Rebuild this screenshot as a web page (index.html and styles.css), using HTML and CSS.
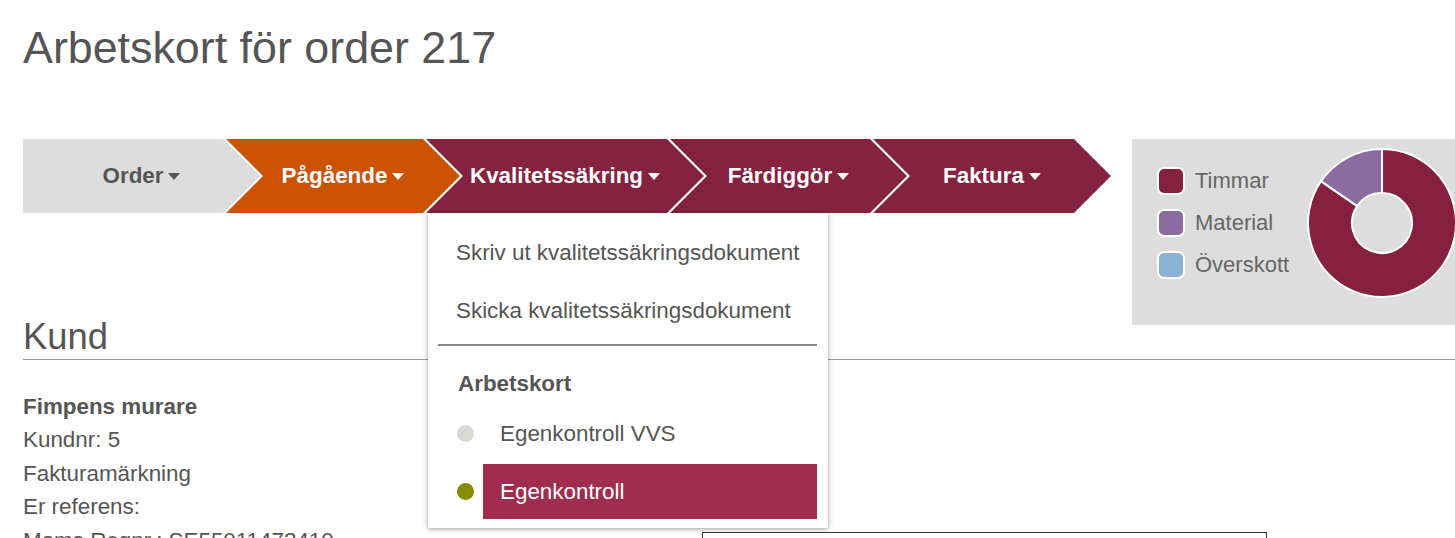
FILE: index.html
```html
<!DOCTYPE html>
<html lang="sv">
<head>
    <meta charset="UTF-8">
    <meta name="viewport" content="width=device-width, initial-scale=1.0">
    <title>Arbetskort för order 217</title>
    <link rel="stylesheet" href="styles.css">
</head>
<body>
    <div class="page">
        <h1 class="page-title">Arbetskort för order 217</h1>

        <!-- Order steps + cost chart -->
        <div class="top-row">
            <ul class="steps">
                <li class="step step-first step-done">
                    <span class="step-shape">Order<i class="caret"></i></span>
                </li>
                <li class="step step-active step-narrow">
                    <span class="step-shape">Pågående<i class="caret"></i></span>
                </li>
                <li class="step step-todo">
                    <span class="step-shape">Kvalitetssäkring<i class="caret"></i></span>

                    <!-- Open dropdown -->
                    <div class="dropdown">
                        <a class="dropdown-link" href="#">Skriv ut kvalitetssäkringsdokument</a>
                        <a class="dropdown-link" href="#">Skicka kvalitetssäkringsdokument</a>
                        <div class="dropdown-divider"></div>
                        <div class="dropdown-header">Arbetskort</div>
                        <div class="card-row">
                            <span class="status-dot dot-empty"></span>
                            <a class="card-link" href="#">Egenkontroll VVS</a>
                        </div>
                        <div class="card-row">
                            <span class="status-dot dot-done"></span>
                            <a class="card-link card-link-selected" href="#">Egenkontroll</a>
                        </div>
                    </div>
                </li>
                <li class="step step-todo">
                    <span class="step-shape">Färdiggör<i class="caret"></i></span>
                </li>
                <li class="step step-todo step-last">
                    <span class="step-shape">Faktura<i class="caret"></i></span>
                </li>
            </ul>

            <div class="cost-panel">
                <ul class="legend">
                    <li><span class="swatch swatch-hours"></span>Timmar</li>
                    <li><span class="swatch swatch-material"></span>Material</li>
                    <li><span class="swatch swatch-surplus"></span>Överskott</li>
                </ul>
                <svg class="donut" width="150" height="150" viewBox="0 0 150 150">
                    <path d="M75,1 A74,74 0 1 1 13.94,33.19 L50.25,58.05 A30,30 0 1 0 75,45 Z" fill="#85213f" stroke="#fff" stroke-width="2"/>
                    <path d="M13.94,33.19 A74,74 0 0 1 75,1 L75,45 A30,30 0 0 0 50.25,58.05 Z" fill="#8b6ba0" stroke="#fff" stroke-width="2"/>
                </svg>
            </div>
        </div>

        <!-- Customer -->
        <section class="customer">
            <h2 class="section-title">Kund</h2>
            <div class="customer-body">
                <div class="customer-info">
                    <p><strong>Fimpens murare</strong></p>
                    <p>Kundnr: 5</p>
                    <p>Fakturamärkning</p>
                    <p>Er referens:</p>
                    <p>Moms Regnr.: SE55011472410</p>
                </div>
                <div class="customer-box"></div>
            </div>
        </section>
    </div>
</body>
</html>
```

FILE: styles.css
```css
/* General page */
html, body {
    overflow: hidden;
}

body {
    margin: 0;
    font-family: "Liberation Sans", Arial, sans-serif;
    font-size: 22.4px;
    color: #555;
    background: #fff;
}

.page {
    padding: 20px 0 0 23px;
}

.page-title {
    margin: 0;
    font-size: 44.8px;
    font-weight: normal;
    line-height: 54px;
    color: #555;
}

/* Steps + chart row */
.top-row {
    display: flex;
    height: 74px;
    margin-top: 65px;
}

.steps {
    display: flex;
    flex-shrink: 0;
    margin: 0;
    padding: 0;
    list-style: none;
}

.step {
    position: relative;
}

.step + .step {
    margin-left: -34px;
}

.step-shape {
    display: flex;
    align-items: center;
    justify-content: center;
    box-sizing: border-box;
    min-width: 237px;
    height: 74px;
    padding: 0 44px;
    font-weight: bold;
    color: #fff;
    white-space: nowrap;
    clip-path: polygon(0 0, calc(100% - 37px) 0, 100% 50%, calc(100% - 37px) 100%, 0 100%, 37px 50%);
}

.step-narrow .step-shape {
    min-width: 234px;
}

.step-last .step-shape {
    min-width: 238px;
}

.step-first .step-shape {
    clip-path: polygon(0 0, calc(100% - 37px) 0, 100% 50%, calc(100% - 37px) 100%, 0 100%);
}

.step-done .step-shape {
    background: #dddddd;
    color: #555;
}

.step-active .step-shape {
    background: #cc5204;
}

.step-todo .step-shape {
    background: #852240;
}

.caret {
    display: inline-block;
    width: 0;
    height: 0;
    margin-left: 5px;
    border-left: 6px solid transparent;
    border-right: 6px solid transparent;
    border-top: 7px solid currentColor;
}

/* Dropdown under a step */
.dropdown {
    position: absolute;
    top: 100%;
    left: 2px;
    z-index: 10;
    box-sizing: border-box;
    width: 400px;
    padding: 11px 11px 9px 10px;
    background: #fff;
    box-shadow: 0 1px 5px rgba(0, 0, 0, 0.4);
}

.dropdown-link {
    display: block;
    height: 58px;
    padding-left: 18px;
    line-height: 58px;
    color: #555;
    text-decoration: none;
    white-space: nowrap;
}

.dropdown-divider {
    height: 2px;
    margin-top: 4px;
    background: #8a8a8a;
}

.dropdown-header {
    padding: 25px 0 9px 20px;
    line-height: 26px;
    font-weight: bold;
    color: #555;
}

.card-row {
    display: flex;
    align-items: center;
    height: 55px;
}

.card-row + .card-row {
    margin-top: 3px;
}

.status-dot {
    width: 17px;
    height: 17px;
    margin: 0 9px 0 19px;
    border-radius: 50%;
}

.dot-empty {
    background: #d9d9d4;
}

.dot-done {
    background: #868c00;
}

.card-link {
    flex: 1;
    height: 55px;
    padding-left: 17px;
    line-height: 55px;
    color: #555;
    text-decoration: none;
}

.card-link-selected {
    background: #a02d4f;
    color: #fff;
}

/* Cost chart */
.cost-panel {
    display: flex;
    align-self: flex-start;
    flex: 1;
    min-width: 0;
    height: 186px;
    margin-left: 21px;
    padding-left: 25px;
    background: #dddddd;
    overflow: hidden;
}

.legend {
    flex-shrink: 0;
    width: 150px;
    margin: 0;
    padding: 28px 0 0;
    list-style: none;
}

.legend li {
    display: flex;
    align-items: center;
    height: 28px;
    margin-bottom: 14px;
    font-size: 22px;
    color: #666;
}

.swatch {
    box-sizing: border-box;
    width: 28px;
    height: 28px;
    margin-right: 10px;
    border: 2px solid #fff;
    border-radius: 7px;
}

.swatch-hours {
    background: #85213f;
}

.swatch-material {
    background: #8b6ba0;
}

.swatch-surplus {
    background: #8bb2d4;
}

.donut {
    flex-shrink: 0;
    margin-top: 9px;
}

/* Customer */
.customer {
    margin-top: 102px;
}

.section-title {
    margin: 0;
    font-size: 36.4px;
    font-weight: normal;
    line-height: 1.2;
    color: #555;
    border-bottom: 1px solid #999;
}

.customer-body {
    display: flex;
    margin-top: 30px;
}

.customer-info {
    width: 679px;
}

.customer-info p {
    margin: 0;
    line-height: 33.6px;
}

.customer-box {
    width: 563px;
    height: 120px;
    margin-top: 142px;
    border: 1px solid #333;
}
```
